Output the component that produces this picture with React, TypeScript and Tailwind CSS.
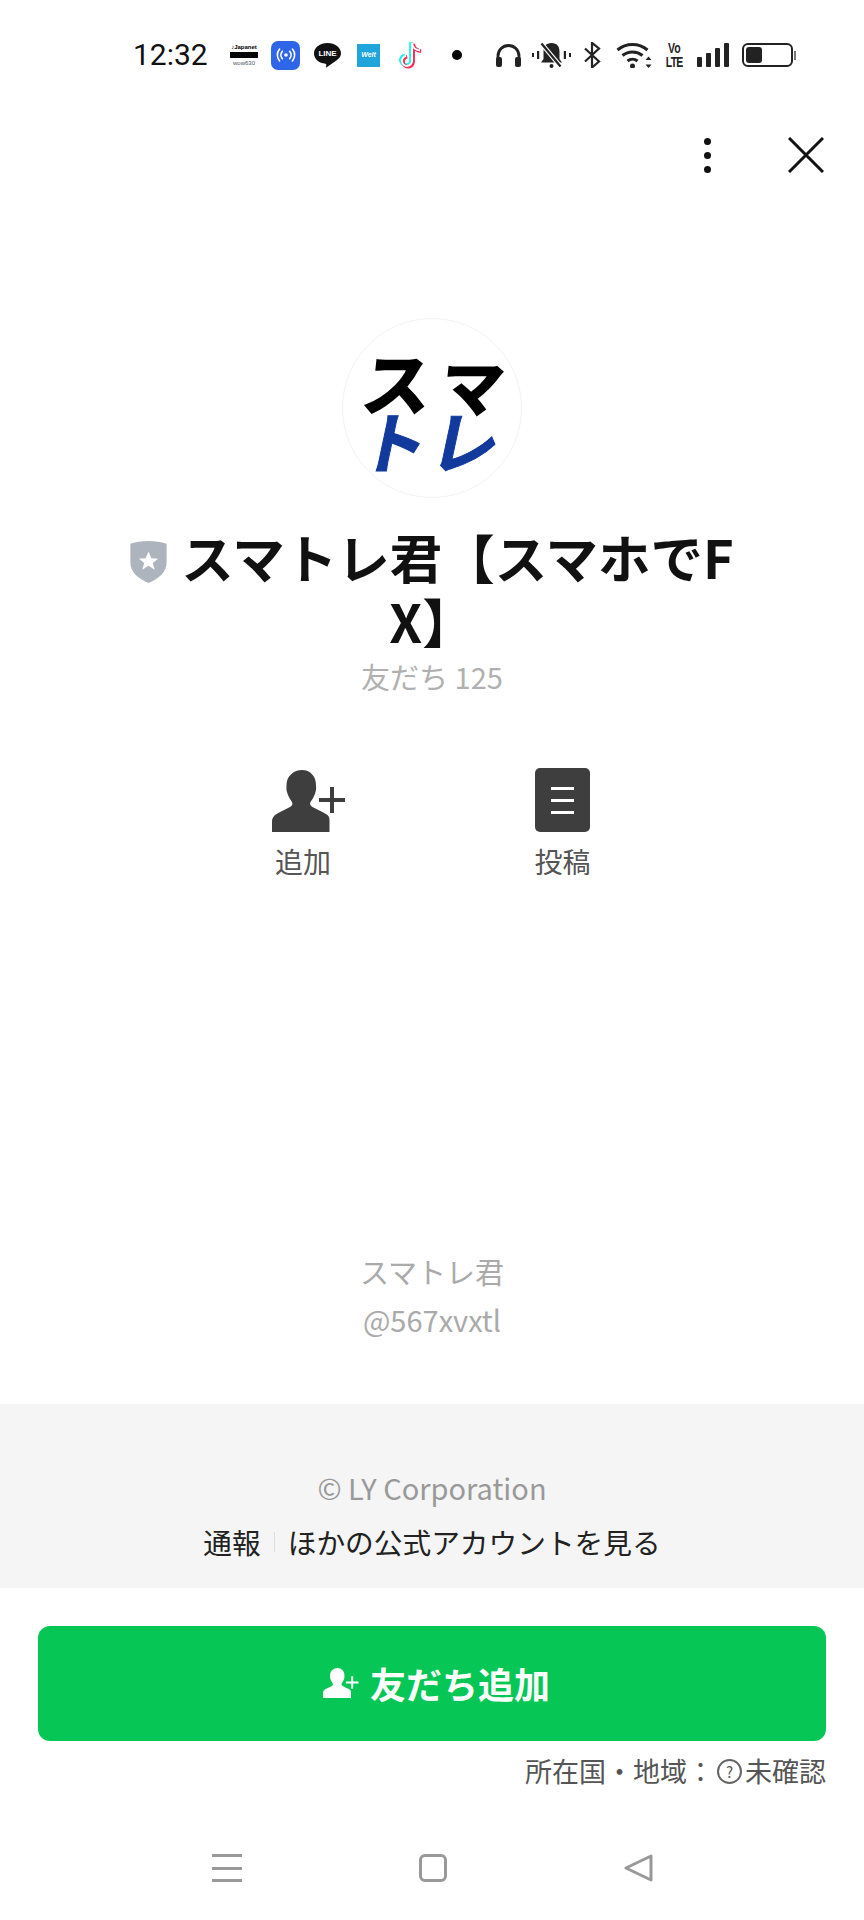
const cjk = "font-['Noto_Sans_CJK_JP','Noto_Sans',sans-serif]"

function UserPlus({ className }: { className: string }) {
  return (
    <svg viewBox="0 0 74 62" className={className} fill="currentColor">
      <path d="M30 0c8 0 14 6 14 15 0 3 .5 4-.5 7-1 4-3 7-5 10-1 2 0 4 2 5 5 3 11 5 15 8 2 2 2 4 2 6v11H0V51c0-2 1-4 3-6 4-3 10-5 15-8 2-1 3-3 2-5-2-3-4-6-5-10-1-3-.5-4-.5-7C14.500 6 22 0 30 0z" />
      <path d="M47 28h11V17h4v11h11v4H62v11h-4V32H47z" />
    </svg>
  )
}

function StatusIcons() {
  return (
    <div className="flex items-center">
      {/* japanet */}
      <div className="w-[28px] ml-[22px] flex flex-col items-center text-black">
        <span className="text-[6px] leading-[8px] font-bold font-['Liberation_Sans',sans-serif]">♪Japanet</span>
        <span className="w-full h-[6px] my-[1px] bg-black" />
        <span className="text-[6px] leading-[8px] text-gray-600 font-['Liberation_Sans',sans-serif]">wow630</span>
      </div>
      {/* blue broadcast */}
      <div className="ml-[13px] w-[29px] h-[29px] rounded-[7px] bg-[#2f66e8] flex items-center justify-center">
        <svg viewBox="0 0 24 24" className="w-[22px] h-[22px]" fill="none" stroke="white" strokeWidth="1.800" strokeLinecap="round">
          <circle cx="12" cy="12" r="2" fill="white" stroke="none" />
          <path d="M8 8a6 6 0 0 0 0 8M16 8a6 6 0 0 1 0 8M5 5.500a10 10 0 0 0 0 13M19 5.500a10 10 0 0 1 0 13" />
        </svg>
      </div>
      {/* LINE */}
      <div className="relative ml-[14px] w-[27px] h-[25px]">
        <svg viewBox="0 0 27 25" className="absolute inset-0 w-full h-full">
          <path d="M13.500 0C6 0 0 4.500 0 10.500c0 5.500 5 9.500 11.500 10.300.8.2.9 1 .7 2l-.3 2 8-5.500c4-2.600 7.100-5.300 7.100-8.800C27 4.500 21 0 13.500 0z" fill="#111" />
        </svg>
        <span className="absolute left-0 right-0 top-[6px] text-center text-[8px] leading-[9px] font-bold text-white font-['Liberation_Sans',sans-serif]">LINE</span>
      </div>
      {/* Welt */}
      <div className="ml-[16px] w-[23px] h-[23px] bg-[#1fa4dc] flex items-center justify-center text-[7px] font-bold italic text-white font-['Liberation_Sans',sans-serif]">Welt</div>
      {/* tiktok */}
      <svg viewBox="0 0 26 29" className="ml-[17px] w-[26px] h-[29px]" fill="none" strokeWidth="3.500">
        <path d="M15 2v18a5 5 0 1 1-6-5M15 2c.5 4 3 7 8 7.500" stroke="#25f4ee" transform="translate(-1.200 -.8)" />
        <path d="M15 2v18a5 5 0 1 1-6-5M15 2c.5 4 3 7 8 7.500" stroke="#fe2c55" transform="translate(1.200 .8)" />
        <path d="M15 2v18a5 5 0 1 1-6-5M15 2c.5 4 3 7 8 7.500" stroke="#fff" strokeWidth="2" />
      </svg>
      <span className="ml-[29px] w-[10px] h-[10px] rounded-full bg-black" />
      {/* headphones */}
      <svg viewBox="0 0 25 23" className="ml-[34px] w-[25px] h-[23px]" fill="none">
        <path d="M2 16v-4a10.500 10.500 0 0 1 21 0v4" stroke="#222" strokeWidth="2.800" />
        <rect x="0" y="13" width="6" height="10" rx="2" fill="#222" />
        <rect x="19" y="13" width="6" height="10" rx="2" fill="#222" />
      </svg>
      {/* muted bell */}
      <svg viewBox="0 0 39 26" className="ml-[11px] w-[39px] h-[26px]" fill="#222">
        <path d="M19.500 1c5.500 0 8 3.500 8 8.500V17l2.500 3.500H9l2.500-3.500V9.500C11.500 4.500 14 1 19.500 1z" />
        <circle cx="19.500" cy="24" r="2" />
        <path d="M9 1l20 24" stroke="#fff" strokeWidth="4.500" />
        <path d="M9.500 1.500l19 23" stroke="#222" strokeWidth="2.200" />
        <path d="M0 11h2v4H0zM5 9h2.200v8H5zM37 11h2v4h-2zM31.800 9H34v8h-2.200z" />
      </svg>
      {/* bluetooth */}
      <svg viewBox="0 0 17 26" className="ml-[13px] w-[17px] h-[26px]" fill="none" stroke="#222" strokeWidth="2.200">
        <path d="M1 6.500l14 13-7 6V.8l7 5.700-14 13" />
      </svg>
      {/* wifi */}
      <svg viewBox="0 0 36 26" className="ml-[15px] w-[36px] h-[26px]" fill="none" stroke="#222" strokeWidth="3">
        <path d="M1.500 8a23 23 0 0 1 30 0M6.500 13.500a16 16 0 0 1 20 0M11.500 19a8 8 0 0 1 10 0" />
        <circle cx="16.500" cy="24" r="2.500" fill="#222" stroke="none" />
        <path d="M32.500 14.500l3 3.500h-6zM32.500 26l3-3.500h-6z" fill="#222" stroke="none" />
      </svg>
      {/* VoLTE */}
      <div className="ml-[13px] w-[18px] flex flex-col items-center font-bold text-[#222] text-[14px] leading-[14px] font-['Liberation_Sans',sans-serif]">
        <span className="scale-x-75">Vo</span>
        <span className="scale-x-75 tracking-[-1px]">LTE</span>
      </div>
      {/* signal */}
      <div className="ml-[14px] flex items-end gap-[4px] h-[24px]">
        <span className="w-[5px] h-[10px] rounded-[1px] bg-[#222]" />
        <span className="w-[5px] h-[14px] rounded-[1px] bg-[#222]" />
        <span className="w-[5px] h-[19px] rounded-[1px] bg-[#222]" />
        <span className="w-[5px] h-[24px] rounded-[1px] bg-[#222]" />
      </div>
      {/* battery */}
      <div className="ml-[13px] flex items-center">
        <div className="w-[51px] h-[24px] rounded-[6px] border-2 border-[#222] p-[2px]">
          <div className="w-[16px] h-full rounded-[3px] bg-[#222]" />
        </div>
        <span className="ml-[1px] w-[2px] h-[9px] bg-[#777]" />
      </div>
    </div>
  )
}

export default function App() {
  return (
    <div className={`w-[864px] h-[1920px] bg-white flex flex-col ${cjk}`}>
      <div className="h-[110px] pl-[133px] flex items-center">
        <span className="w-[75px] text-[30px] leading-none text-[#111] font-['Roboto',sans-serif] whitespace-nowrap">12:32</span>
        <StatusIcons />
      </div>

      <div className="mt-[15px] h-[60px] flex items-center justify-end pr-[40px]">
        <div className="flex flex-col gap-[7px] mr-[77px]">
          <span className="w-[7px] h-[7px] rounded-full bg-[#111]" />
          <span className="w-[7px] h-[7px] rounded-full bg-[#111]" />
          <span className="w-[7px] h-[7px] rounded-full bg-[#111]" />
        </div>
        <svg viewBox="0 0 36 36" className="w-[36px] h-[36px]" stroke="#111" strokeWidth="3">
          <path d="M1 1l34 34M35 1L1 35" />
        </svg>
      </div>

      <div className="mt-[133px] flex flex-col items-center">
        <div className="relative w-[180px] h-[180px] rounded-full border border-[#f2f2f2] font-bold">
          <span className="absolute left-[20px] top-[35px] text-[68px] leading-[54px] text-black -skew-x-6 [-webkit-text-stroke:2px_#000]">ス</span>
          <span className="absolute left-[99px] top-[43px] text-[62px] leading-[44px] text-black -skew-x-6 [-webkit-text-stroke:2px_#000]">マ</span>
          <span className="absolute left-[20px] top-[93px] text-[66px] leading-[54px] text-[#123a9c] -skew-x-12 [-webkit-text-stroke:1px_#123a9c]">ト</span>
          <span className="absolute left-[90px] top-[93px] text-[68px] leading-[54px] text-[#123a9c] -skew-x-12 [-webkit-text-stroke:1px_#123a9c]">レ</span>
        </div>

        <h1 className="mt-[26px] w-[620px] text-center text-[52.500px] leading-[64px] font-bold text-[#111] break-all">
          <svg viewBox="0 0 38 44" className="inline-block align-[-4px] w-[37px] h-[42px] mr-[14px]">
            <path d="M19 0c7 0 13 1 19 3v19c0 11-8 17-19 22C8 39 0 33 0 22V3c6-2 12-3 19-3z" fill="#aeb4bd" />
            <path d="M19 11l3 7 7 .5-5.500 4.500 2 7-6.500-4-6.500 4 2-7L9 18.500l7-.5z" fill="#fff" />
          </svg>
          スマトレ君【スマホでFX】
        </h1>

        <p className="mt-[4px] text-[29px] leading-[40px] text-[#b0b0b0]">友だち 125</p>

        <div className="mt-[72px] flex justify-center gap-[161px]">
          <div className="w-[100px] flex flex-col items-center text-[#444]">
            <UserPlus className="ml-[15px] mt-[2px] w-[74px] h-[62px] text-[#3e3e3e]" />
            <span className="mt-[9px] ml-[3px] text-[28px] leading-[40px] text-[#555]">追加</span>
          </div>
          <div className="w-[100px] flex flex-col items-center">
            <div className="w-[55px] h-[64px] rounded-[5px] bg-[#3e3e3e] flex flex-col items-center justify-center gap-[9px]">
              <span className="w-[23px] h-[3px] bg-white" />
              <span className="w-[23px] h-[3px] bg-white" />
              <span className="w-[23px] h-[3px] bg-white" />
            </div>
            <span className="mt-[9px] text-[28px] leading-[40px] text-[#555]">投稿</span>
          </div>
        </div>
      </div>

      <div className="mt-[366px] flex flex-col items-center text-[29px] leading-[48px] text-[#aaaaaa]">
        <span>スマトレ君</span>
        <span>@567xvxtl</span>
      </div>

      <div className="mt-[61px] h-[184px] bg-[#f5f5f5] flex flex-col items-center pt-[63px]">
        <span className="text-[29px] leading-[40px] text-[#999999]">© LY Corporation</span>
        <div className="mt-[15px] flex items-center text-[28.700px] leading-[40px] text-[#222]">
          <span>通報</span>
          <span className="mx-[13px] w-px h-[20px] bg-[#dddddd]" />
          <span>ほかの公式アカウントを見る</span>
        </div>
      </div>

      <div className="mt-[38px] mx-[38px] h-[115px] rounded-[12px] bg-[#06c755] flex items-center justify-center pl-[9px] pb-[1px] text-white">
        <UserPlus className="w-[36px] h-[32px]" />
        <span className="ml-[11px] text-[36px] leading-none font-bold">友だち追加</span>
      </div>

      <div className="mt-[10px] pr-[38px] flex items-center justify-end text-[27px] leading-[40px] text-[#555]">
        <span className="mr-[3px]">所在国・地域：</span>
        <span className="w-[25px] h-[25px] mr-[3px] rounded-full border-2 border-[#666] flex items-center justify-center text-[15px] leading-none">?</span>
        <span>未確認</span>
      </div>

      <div className="mt-[63px] flex items-center justify-center gap-[177px]">
        <div className="w-[30px] h-[28px] flex flex-col justify-between">
          <span className="h-[3px] bg-[#999]" />
          <span className="h-[3px] bg-[#999]" />
          <span className="h-[3px] bg-[#999]" />
        </div>
        <div className="w-[28px] h-[28px] rounded-[6px] border-[3px] border-[#999]" />
        <svg viewBox="0 0 29 28" className="w-[29px] h-[28px]" fill="none" stroke="#999" strokeWidth="3" strokeLinejoin="round">
          <path d="M27 2v24L2 14z" />
        </svg>
      </div>
    </div>
  )
}
